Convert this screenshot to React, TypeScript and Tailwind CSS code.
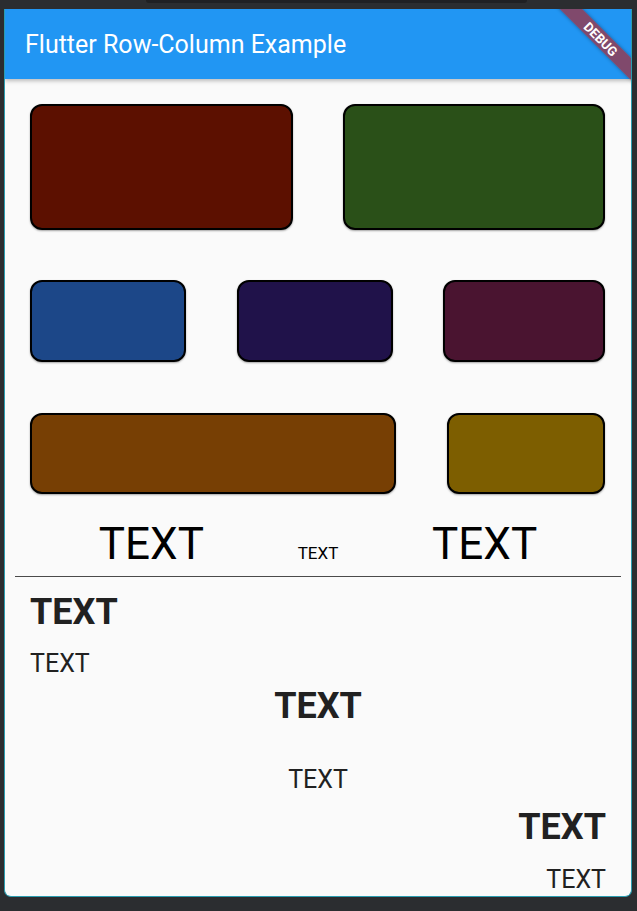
import React from "react";

const roboto = { fontFamily: "Roboto, 'Noto Sans', sans-serif" } as React.CSSProperties;

function Box({ w, h, color }: { w: string; h: string; color: string }) {
  return <div className={`${w} ${h} ${color} border-[2.5px] border-black rounded-[12px] shadow-[0_1px_2px_rgba(0,0,0,0.35)]`} />;
}

export default function App() {
  return (
    <div className="w-[637px] h-[911px] bg-[#2b2d30] overflow-hidden" style={roboto}>
      <div className="h-[9px] flex justify-center">
        <div className="w-[381px] h-[3px] ml-[36px] bg-[#1f2023] rounded-b-[6px]" />
      </div>
      <div className="relative ml-[4px] w-[628px] h-[888px] bg-[#fafafa] border border-t-0 border-[#2b9db0] rounded-b-[7px] overflow-hidden flex flex-col">
        <div className="h-[70px] shrink-0 bg-[#2196F3] flex items-center pl-[20px] shadow-[0_2px_4px_rgba(0,0,0,0.25)] relative z-10">
          <span className="text-white text-[25px] font-normal leading-none">Flutter Row-Column Example</span>
        </div>

        <div className="flex flex-col pl-[25px] pr-[26px]">
          <div className="flex justify-between mt-[25px]">
            <Box w="w-[263px]" h="h-[126px]" color="bg-[#5c1000]" />
            <Box w="w-[262px]" h="h-[126px]" color="bg-[#2a5018]" />
          </div>
          <div className="flex justify-between mt-[50px]">
            <Box w="w-[156px]" h="h-[82px]" color="bg-[#1c4788]" />
            <Box w="w-[156px]" h="h-[82px]" color="bg-[#20124a]" />
            <Box w="w-[162px]" h="h-[82px]" color="bg-[#4a1430]" />
          </div>
          <div className="flex justify-between mt-[51px]">
            <Box w="w-[366px]" h="h-[81px]" color="bg-[#773f04]" />
            <Box w="w-[158px]" h="h-[81px]" color="bg-[#7d5e00]" />
          </div>
        </div>

        <div className="flex justify-evenly items-baseline mt-[28px] text-black">
          <span className="text-[44px] leading-[45px]">TEXT</span>
          <span className="text-[17px] leading-[18px]">TEXT</span>
          <span className="text-[44px] leading-[45px]">TEXT</span>
        </div>

        <div className="mx-[10px] mt-[8.5px] h-[1.5px] bg-[#4a4a4a]" />

        <div className="flex flex-col px-[25px] text-[#212121]">
          <div className="self-start mt-[17px] text-[36px] leading-[36px] font-bold">TEXT</div>
          <div className="self-start mt-[21px] text-[25px] leading-[25px]">TEXT</div>
          <div className="self-center mt-[11.5px] text-[36px] leading-[36px] font-bold">TEXT</div>
          <div className="self-center mt-[43px] text-[25px] leading-[25px]">TEXT</div>
          <div className="self-end mt-[17px] text-[36px] leading-[36px] font-bold">TEXT</div>
          <div className="self-end mt-[22px] text-[25px] leading-[25px]">TEXT</div>
        </div>

        <div className="absolute top-0 right-0 w-[100px] h-[100px] overflow-hidden pointer-events-none z-20">
          <div className="absolute left-[10px] top-[22px] w-[120px] h-[16px] rotate-45 bg-[rgba(183,28,28,0.63)] shadow-[0_0_4px_rgba(0,0,0,0.35)] flex items-center justify-center">
            <span className="text-white text-[13px] font-bold leading-none">DEBUG</span>
          </div>
        </div>
      </div>
    </div>
  );
}
